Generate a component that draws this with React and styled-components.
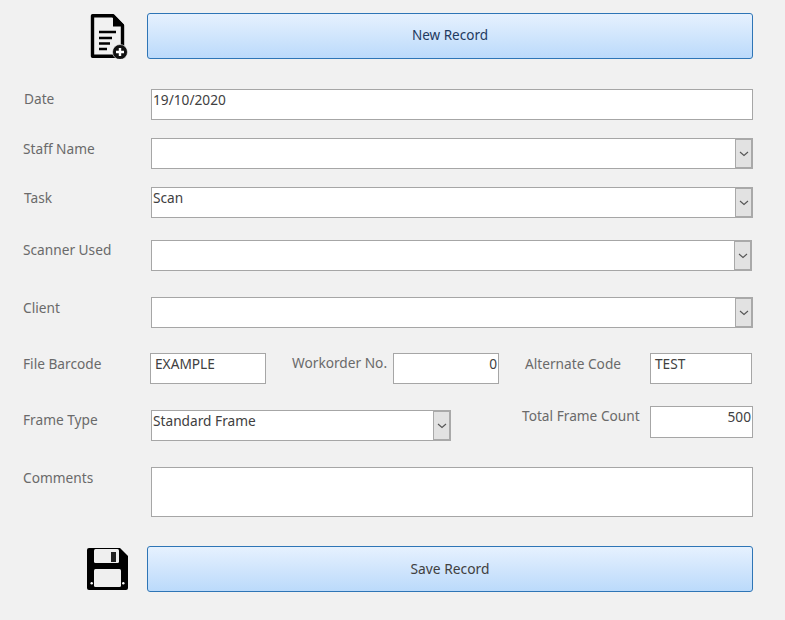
import React from 'react';
import styled, { createGlobalStyle } from 'styled-components';

const Global = createGlobalStyle`
  html, body {
    margin: 0;
    padding: 0;
    background: #f1f1f1;
  }
  body {
    font-family: "Noto Sans", "Open Sans", sans-serif;
    font-size: 13.7px;
  }
`;

const Page = styled.div`
  width: 785px;
  height: 620px;
  overflow: hidden;
  padding-right: 32px;
  box-sizing: border-box;
`;

const Row = styled.div`
  display: flex;
  align-items: flex-start;
  margin-top: ${(p) => p.$mt || 0}px;
`;

const ActionRow = styled(Row)`
  height: ${(p) => p.$h}px;
  align-items: center;
`;

const IconCell = styled.div`
  width: 147px;
  flex: none;
  display: flex;
  justify-content: flex-end;
  padding-right: ${(p) => p.$pr}px;
  box-sizing: border-box;
`;

const ActionButton = styled.button`
  flex: 1;
  height: 100%;
  padding: 0 0 ${(p) => p.$pb}px;
  border: 1px solid #2e75b6;
  border-radius: 3px;
  background: linear-gradient(#e6f1fe, #bbdafb);
  font: inherit;
  font-size: ${(p) => p.$size}px;
  color: ${(p) => p.$color};
`;

const Label = styled.div`
  width: ${(p) => p.$w || 150}px;
  flex: none;
  box-sizing: border-box;
  padding-left: ${(p) => p.$pl || 23}px;
  padding-top: ${(p) => p.$pt || 0}px;
  line-height: 18px;
  font-size: 13.7px;
  color: #6a6a6a;
  white-space: nowrap;
`;

const Field = styled.div`
  box-sizing: border-box;
  height: ${(p) => p.$h || 31}px;
  width: ${(p) => (p.$w ? `${p.$w}px` : 'auto')};
  flex: ${(p) => (p.$w ? 'none' : 1)};
  margin-top: ${(p) => p.$mt || 0}px;
  margin-right: ${(p) => p.$mr || 0}px;
  padding: 0 ${(p) => p.$px ?? 1}px;
  background: #fff;
  border: 1px solid #a6a6a6;
  color: #404040;
  font-size: 13.7px;
  line-height: 20px;
  text-align: ${(p) => (p.$right ? 'right' : 'left')};
  white-space: nowrap;
`;

const Select = styled(Field)`
  display: flex;
  justify-content: space-between;
  padding-right: 0;
`;

const Arrow = styled.div`
  flex: none;
  width: 18px;
  margin: -1px -1px -1px 0;
  box-sizing: border-box;
  background: #e2e2e2;
  border: 2px solid #a9a9a9;
  border-left-width: 1px;
  display: flex;
  align-items: center;
  justify-content: center;
`;

const Chevron = () => (
  <svg width="10" height="6" viewBox="0 0 10 6">
    <path d="M1 1 L5 4.5 L9 1" fill="none" stroke="#555" strokeWidth="1.1" />
  </svg>
);

const NewRecordIcon = () => (
  <svg width="38" height="45" viewBox="0 0 38 45">
    <path d="M2.5 1.7 H23 L32.5 11.5 V42.3 H2.5 Z" fill="none" stroke="#000" strokeWidth="3.4" strokeLinejoin="round" />
    <path d="M23 0 L34 11 V12.5 H23 Z" fill="#000" />
    <path d="M9 18 H26 M9 24 H22 M9 29.5 H20 M9 35 H17" stroke="#000" strokeWidth="2.4" />
    <circle cx="30" cy="38" r="7.5" fill="#111" stroke="#f1f1f1" strokeWidth="0.6" />
    <path d="M30 34 V42 M26 38 H34" stroke="#fff" strokeWidth="2.4" />
  </svg>
);

const SaveIcon = () => (
  <svg width="41" height="42" viewBox="0 0 41 42">
    <path d="M2 0 H33 L41 8 V40 A2 2 0 0 1 39 42 H2 A2 2 0 0 1 0 40 V2 A2 2 0 0 1 2 0 Z" fill="#000" />
    <rect x="7" y="1" width="25" height="14" rx="1.5" fill="#efefef" />
    <rect x="24" y="4" width="5" height="10" fill="#222" />
    <rect x="7" y="21" width="27" height="18" rx="1.5" fill="#efefef" />
    <circle cx="4.7" cy="35.3" r="1.2" fill="#fff" />
    <circle cx="36.3" cy="35.3" r="1.2" fill="#fff" />
  </svg>
);

const SelectField = ({ value, ...rest }) => (
  <Select {...rest}>
    <span>{value}</span>
    <Arrow>
      <Chevron />
    </Arrow>
  </Select>
);

const App = () => (
  <Page>
    <Global />
    <ActionRow $mt={13} $h={46}>
      <IconCell $pr={19}>
        <NewRecordIcon />
      </IconCell>
      <ActionButton $color="#1f3a5f" $pb={3} $size={13.5}>New Record</ActionButton>
    </ActionRow>

    <Row $mt={30}>
      <Label $w={151} $pl={24} $pt={1}>Date</Label>
      <Field>19/10/2020</Field>
    </Row>
    <Row $mt={18}>
      <Label $w={151} $pt={2}>Staff Name</Label>
      <SelectField />
    </Row>
    <Row $mt={18}>
      <Label $w={151} $pl={24} $pt={2}>Task</Label>
      <SelectField value="Scan" />
    </Row>
    <Row $mt={22}>
      <Label $w={151} $pt={1}>Scanner Used</Label>
      <SelectField $mr={1} />
    </Row>
    <Row $mt={26}>
      <Label $w={151} $pt={2}>Client</Label>
      <SelectField />
    </Row>

    <Row $mt={25}>
      <Label $pt={2}>File Barcode</Label>
      <Field $w={116} $px={4}>EXAMPLE</Field>
      <Label $w={127} $pl={26} $pt={1}>Workorder No.</Label>
      <Field $w={106} $px={1} $right>0</Field>
      <Label $w={151} $pl={26} $pt={2}>Alternate Code</Label>
      <Field $w={102} $px={4}>TEST</Field>
    </Row>

    <Row $mt={22}>
      <Label $w={151} $pt={5}>Frame Type</Label>
      <SelectField $w={300} $mt={4} value="Standard Frame" />
      <Label $w={199} $pl={71} $pt={1}>Total Frame Count</Label>
      <Field $w={103} $h={32} $right>500</Field>
    </Row>

    <Row $mt={26}>
      <Label $w={151} $pt={2}>Comments</Label>
      <Field $h={50} />
    </Row>

    <ActionRow $mt={29} $h={46}>
      <IconCell $pr={19}>
        <SaveIcon />
      </IconCell>
      <ActionButton $color="#404040" $pb={1} $size={13.8}>Save Record</ActionButton>
    </ActionRow>
  </Page>
);

export default App;
